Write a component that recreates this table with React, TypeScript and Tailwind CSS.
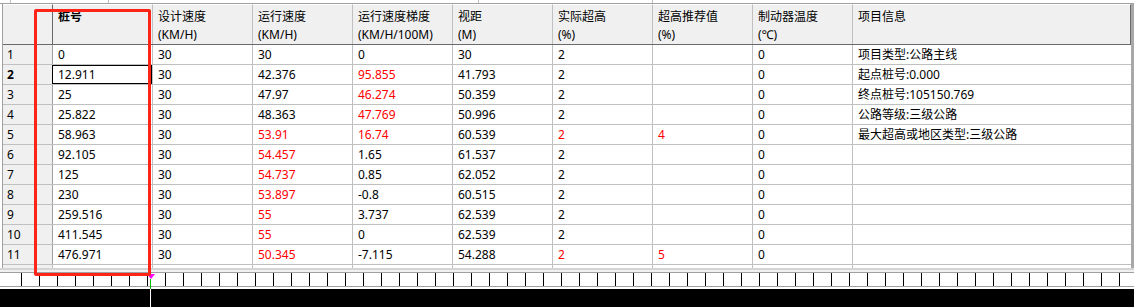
import React from 'react';

type Cell = { v: string; red?: boolean };

const headers: [string, string][] = [
    ['桩号', ''],
    ['设计速度', '(KM/H)'],
    ['运行速度', '(KM/H)'],
    ['运行速度梯度', '(KM/H/100M)'],
    ['视距', '(M)'],
    ['实际超高', '(%)'],
    ['超高推荐值', '(%)'],
    ['制动器温度', '(℃)'],
    ['项目信息', ''],
];

const widths = ['w-[100px]', 'w-[100px]', 'w-[100px]', 'w-[100px]', 'w-[100px]', 'w-[100px]', 'w-[100px]', 'w-[100px]', 'w-[279px]'];

const r = (v: string): Cell => ({ v, red: true });
const b = (v: string): Cell => ({ v });

const rows: Cell[][] = [
    [b('0'), b('30'), b('30'), b('0'), b('30'), b('2'), b(''), b('0'), b('项目类型:公路主线')],
    [b('12.911'), b('30'), b('42.376'), r('95.855'), b('41.793'), b('2'), b(''), b('0'), b('起点桩号:0.000')],
    [b('25'), b('30'), b('47.97'), r('46.274'), b('50.359'), b('2'), b(''), b('0'), b('终点桩号:105150.769')],
    [b('25.822'), b('30'), b('48.363'), r('47.769'), b('50.996'), b('2'), b(''), b('0'), b('公路等级:三级公路')],
    [b('58.963'), b('30'), r('53.91'), r('16.74'), b('60.539'), r('2'), r('4'), b('0'), b('最大超高或地区类型:三级公路')],
    [b('92.105'), b('30'), r('54.457'), b('1.65'), b('61.537'), b('2'), b(''), b('0'), b('')],
    [b('125'), b('30'), r('54.737'), b('0.85'), b('62.052'), b('2'), b(''), b('0'), b('')],
    [b('230'), b('30'), r('53.897'), b('-0.8'), b('60.515'), b('2'), b(''), b('0'), b('')],
    [b('259.516'), b('30'), r('55'), b('3.737'), b('62.539'), b('2'), b(''), b('0'), b('')],
    [b('411.545'), b('30'), r('55'), b('0'), b('62.539'), b('2'), b(''), b('0'), b('')],
    [b('476.971'), b('30'), r('50.345'), b('-7.115'), b('54.288'), r('2'), r('5'), b('0'), b('')],
];

const ticks = Array.from({ length: 62 }, (_, i) => i);

export default function App() {
    return (
        <div
            className="relative w-[1134px] h-[307px] overflow-hidden bg-white text-[12px] text-black"
            style={{ fontFamily: '"Noto Sans", "Noto Sans CJK SC", sans-serif' }}
        >
            {/* top strip: edge of pane above */}
            <div className="flex h-[4px] border-b border-[#a0a0a0]">
                <div className="w-[10px]" />
                <div className="w-[98px] border-l border-[#c0c0c0]" />
                <div className="w-[370px] border-l border-[#c0c0c0]" />
                <div className="w-[174px] border-l border-[#c0c0c0]" />
                <div className="flex-1 border-l border-[#c0c0c0]" />
            </div>

            <div className="flex">
                <div className="w-[2px] shrink-0" />
                <div className="flex flex-col border-l border-[#a0a0a0]">
                    {/* header */}
                    <div className="flex h-[41px] bg-[#f0f0f0] border-b border-[#696969]">
                        <div className="w-[49px] shrink-0 border-t border-white" />
                        {headers.map(([a, c], i) => (
                            <div
                                key={i}
                                className={`${widths[i]} shrink-0 border-t border-white border-l pl-[5px] pt-[3px] leading-[18px] ${i === 0 ? 'border-l-[#696969] font-bold' : 'border-l-[#c0c0c0]'} ${i === 8 ? 'border-r border-r-[#696969]' : ''}`}
                            >
                                <div>{a}</div>
                                <div>{c}</div>
                            </div>
                        ))}
                    </div>

                    {/* body */}
                    {rows.map((row, ri) => (
                        <div key={ri} className="flex h-[20px] border-b border-[#c0c0c0]">
                            <div
                                className={`w-[49px] shrink-0 bg-[#f0f0f0] pl-[4px] leading-[19px] ${ri === 1 ? 'font-bold' : ''}`}
                            >
                                {ri + 1}
                            </div>
                            {row.map((c, ci) => (
                                <div
                                    key={ci}
                                    className={`${widths[ci]} shrink-0 border-l pl-[5px] leading-[19px] whitespace-nowrap ${ci === 0 ? 'border-l-[#a0a0a0]' : 'border-l-[#c0c0c0]'} ${c.red ? 'text-[#ff0000]' : ''} ${ri === 1 && ci === 0 ? 'outline outline-1 outline-black -outline-offset-1' : ''}`}
                                >
                                    {c.v}
                                </div>
                            ))}
                        </div>
                    ))}

                    {/* partial row */}
                    <div className="flex h-[3px]">
                        <div className="w-[49px] shrink-0 bg-[#f0f0f0]" />
                        {widths.map((w, i) => (
                            <div key={i} className={`${w} shrink-0 border-l border-l-[#c0c0c0]`} />
                        ))}
                    </div>
                </div>
                {/* scrollbar edge */}
                <div className="w-[3px] h-[264px] bg-[#a8a8a8]" />
            </div>

            {/* ruler */}
            <div className="h-[2px] bg-[#d4d4d4]" />
            <div className="h-[3px] bg-[#f0f0f0] border-b border-[#a0a0a0]" />
            <div className="relative h-[14px] bg-white border-b border-[#a0a0a0]">
                {ticks.map((t) => (
                    <div
                        key={t}
                        className="absolute top-0 h-full w-px bg-black"
                        style={{ left: 21 + t * 18 }}
                    />
                ))}
            </div>
            <div className="h-[2px] bg-white" />
            <div className="relative h-[18px] bg-black">
                <div className="absolute left-[150px] top-0 h-full w-px bg-white" />
            </div>

            {/* cursor marker */}
            <div className="absolute left-[147px] top-[274px] w-0 h-0 border-l-[4px] border-r-[4px] border-t-[5px] border-l-transparent border-r-transparent border-t-[#ff00ff]" />
            <div className="absolute left-[150px] top-[279px] w-px h-[10px] bg-[#00c000]" />

            {/* red highlight box */}
            <div className="absolute left-[34px] top-[9px] w-[117px] h-[267px] border-[3px] border-[#ff2418] rounded-[2px] pointer-events-none" />
        </div>
    );
}
